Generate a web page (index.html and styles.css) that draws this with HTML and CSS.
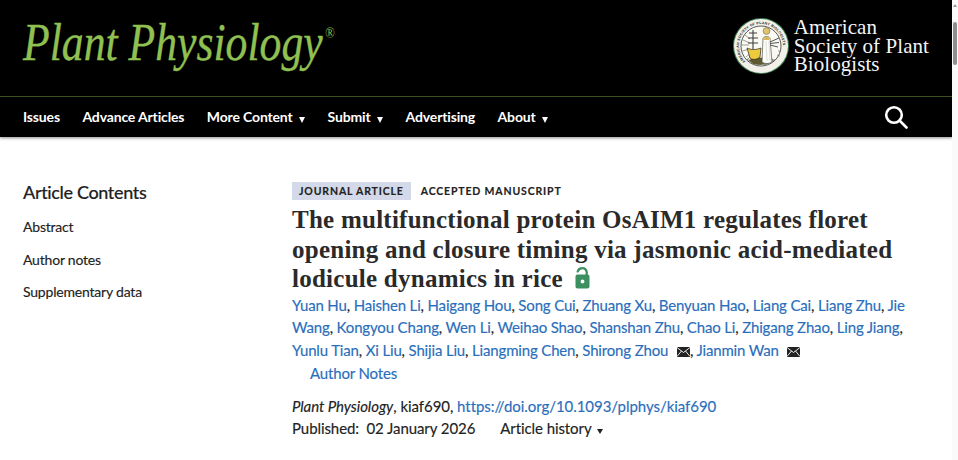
FILE: index.html
```html
<!DOCTYPE html>
<html lang="en">
<head>
<meta charset="utf-8">
<title>Plant Physiology</title>
<link rel="stylesheet" href="styles.css">
</head>
<body>
<div class="page">
  <header class="site-header">
    <div class="brand-row">
      <a class="journal-logo">Plant Physiology<sup class="reg">®</sup></a>
      <div class="society">
        <svg class="seal" width="56" height="56" viewBox="0 0 56 56">
          <defs><path id="ring" d="M12.400 43.600 A22 22 0 1 1 43.600 43.600"/><path id="ring2" d="M9 36 A22 22 0 0 0 47 36"/></defs>
          <circle cx="28" cy="28" r="28" fill="#3f7d54"/>
          <circle cx="28" cy="28" r="27" fill="#f1f1ea"/>
          <circle cx="28" cy="28" r="20" fill="#fafaf2" stroke="#333" stroke-width=".8"/>
          <text class="seal-text"><textPath href="#ring">AMERICAN SOCIETY OF PLANT BIOLOGISTS</textPath></text>
          <text class="seal-text small"><textPath href="#ring2" startOffset="16%">FOUNDED 1924 · MARYLAND</textPath></text>
          <g stroke="#77776e" stroke-width=".7"><path d="M9 27h7M10 22l7 3M9.500 33l7-2M12 17l5 4M13 39l5-4M14 42l5-5M45 33h3M44 37l3 1"/></g>
          <path d="M16 42c6-3 17-3 24-1l-4 5c-6 1-12 1-16 0z" fill="#5d5a30"/>
          <path d="M14 30c4 2 9 2 14 0l-1 9c-3 3-8 3-10 1z" fill="#edc93c" stroke="#222" stroke-width=".7"/>
          <path d="M20 12v19M16 15h8M15 20h10M15 25h10" stroke="#3d3d3d" stroke-width="1.100" fill="none"/>
          <path d="M30 20c1-2 6-2 7 0l2 24c-3 2-8 2-10 0z" fill="#fdfdf8" stroke="#555" stroke-width=".7"/>
          <path d="M33 23l1 20M36 23l1 20" stroke="#bbb" stroke-width=".5"/>
          <circle cx="33.500" cy="13" r="3.400" fill="#e3c46e" stroke="#555" stroke-width=".5"/>
          <path d="M30 19h7l-1 3h-6z" fill="#d8b95a"/>
          <path d="M37 24l9-4M37 25.500l9-1M37 27l8 2" stroke="#555" stroke-width="1"/>
        </svg>
        <div class="society-name">American<br>Society of Plant<br>Biologists</div>
      </div>
    </div>
    <nav class="main-nav">
      <ul class="nav-list">
        <li>Issues</li>
        <li>Advance Articles</li>
        <li>More Content<span class="caret"></span></li>
        <li>Submit<span class="caret"></span></li>
        <li>Advertising</li>
        <li>About<span class="caret"></span></li>
      </ul>
      <svg class="search" width="24" height="24" viewBox="0 0 24 24" fill="none" stroke="#fff" stroke-width="2.600"><circle cx="10" cy="10" r="7.800"/><path d="M15.500 15.500l7 7" stroke-linecap="round"/></svg>
    </nav>
  </header>
  <main class="content">
    <aside class="sidebar">
      <h2 class="contents-title">Article Contents</h2>
      <ul class="contents-list">
        <li>Abstract</li>
        <li>Author notes</li>
        <li>Supplementary data</li>
      </ul>
    </aside>
    <article class="article">
      <div class="tags"><span class="tag-primary">JOURNAL ARTICLE</span><span class="tag-plain">ACCEPTED MANUSCRIPT</span></div>
      <h1 class="title">The multifunctional protein OsAIM1 regulates floret opening and closure timing via jasmonic acid-mediated lodicule dynamics in rice
        <svg class="lock" width="15" height="22" viewBox="0 0 15 22"><path d="M2.700 4.500C3.500 2 5.500 1.200 7.500 1.200a4 4 0 0 1 4.200 4V8" fill="none" stroke="#3c8f5f" stroke-width="2.300" stroke-linecap="round"/><rect x="0.500" y="7.500" width="14" height="14" rx="2" fill="#3c8f5f"/><circle cx="7.500" cy="14.500" r="1.900" fill="#fff"/></svg>
      </h1>
      <p class="authors"><a>Yuan Hu</a>, <a>Haishen Li</a>, <a>Haigang Hou</a>, <a>Song Cui</a>, <a>Zhuang Xu</a>, <a>Benyuan Hao</a>, <a>Liang Cai</a>, <a>Liang Zhu</a>, <a>Jie Wang</a>, <a>Kongyou Chang</a>, <a>Wen Li</a>, <a>Weihao Shao</a>, <a>Shanshan Zhu</a>, <a>Chao Li</a>, <a>Zhigang Zhao</a>, <a>Ling Jiang</a>, <a>Yunlu Tian</a>, <a>Xi Liu</a>, <a>Shijia Liu</a>, <a>Liangming Chen</a>, <a>Shirong Zhou</a> <svg class="mail" width="13" height="10" viewBox="0 0 13 10"><rect width="13" height="10" fill="#222"/><path d="M0 .5l6.500 5 6.500-5M0 9.500l4.500-5.500M13 9.500L8.500 4" fill="none" stroke="#fff" stroke-width=".9"/></svg>, <a>Jianmin Wan</a> <svg class="mail" width="13" height="10" viewBox="0 0 13 10"><rect width="13" height="10" fill="#222"/><path d="M0 .5l6.500 5 6.500-5M0 9.500l4.500-5.500M13 9.500L8.500 4" fill="none" stroke="#fff" stroke-width=".9"/></svg></p>
      <p class="author-notes"><a>Author Notes</a></p>
      <p class="citation"><em>Plant Physiology</em>, kiaf690, <a>https://doi.org/10.1093/plphys/kiaf690</a></p>
      <p class="published"><span>Published:&nbsp; 02 January 2026</span><span class="history">Article history<span class="caret caret-small"></span></span></p>
    </article>
  </main>
</div>
<div class="scrollbar"><span class="arrow"></span><span class="thumb"></span></div>
</body>
</html>
```
FILE: styles.css
```css
* { box-sizing: border-box; }
html, body { margin: 0; height: 460px; overflow: hidden; background: #fff; }
body { display: flex; font-family: "Lato", sans-serif; color: #222; }
.page { width: 952px; flex: none; }
.site-header { background: #000; color: #fff; box-shadow: 0 1px 3px rgba(0,0,0,.45); }
.brand-row { height: 97px; display: flex; justify-content: space-between; align-items: flex-start; padding: 0 23px; border-bottom: 1px solid #3c4f1e; }
.journal-logo { font: italic 52px/1 "Liberation Serif", serif; color: #90c052; -webkit-text-stroke: .35px #90c052; margin-top: 17px; white-space: nowrap; transform: scaleX(.84); transform-origin: 0 0; width: 314px; }
.reg { font-size: 15px; font-style: normal; -webkit-text-stroke: 0; vertical-align: 22px; line-height: 0; margin-left: 3px; }
.society { display: flex; align-items: center; gap: 5px; margin-top: 18px; }
.seal-text { font: 700 3.500px "Liberation Sans", sans-serif; fill: #222; letter-spacing: .25px; }
.seal-text.small { font-size: 2.200px; letter-spacing: 0; }
.society-name { font: 21px/18.500px "Liberation Serif", serif; color: #f4f4f4; letter-spacing: .07px; white-space: nowrap; }
.main-nav { height: 40px; display: flex; align-items: center; justify-content: space-between; padding: 0 23px; }
.nav-list { list-style: none; margin: 0; padding: 0; display: flex; gap: 22.500px; font: 700 14px/1 "Lato", sans-serif; letter-spacing: -.15px; }
.caret { display: inline-block; margin-left: 6.500px; border-style: solid; border-width: 6px 3.500px 0; border-color: currentColor transparent transparent; vertical-align: -1px; }
.search { margin-right: 21px; }
.content { display: flex; padding: 45px 35px 0 23px; -webkit-text-stroke: .15px currentColor; }
.sidebar { width: 269px; flex: none; }
.contents-title { font: 500 18px/20px "Lato", sans-serif; margin: 0 0 16px; color: #222; letter-spacing: -.35px; }
.contents-list { list-style: none; margin: 0; padding: 0; font-size: 14px; line-height: 18px; letter-spacing: -.2px; }
.contents-list li { margin-bottom: 14.700px; }
.article { flex: 1; min-width: 0; }
.tags { display: flex; align-items: center; font: 700 10.500px/18px "Lato", sans-serif; letter-spacing: .85px; }
.tag-primary { background: #d3d9e8; padding: 0 7px; margin-right: 10px; }
.title { font: 700 25px/29.500px "Liberation Serif", serif; margin: 5px 0 0; color: #2a2a2a; letter-spacing: .25px; -webkit-text-stroke: 0; }
.lock { vertical-align: -2px; margin-left: 6px; }
.authors, .author-notes, .citation, .published { margin: 0; font-size: 15px; line-height: 22.800px; letter-spacing: -.16px; }
a { color: #2a6ebb; }
.mail { vertical-align: -1px; margin-left: 5px; }
.author-notes { padding-left: 18px; }
.citation { margin-top: 10px; letter-spacing: -.05px; }
.published { display: flex; gap: 25px; margin-top: 0; letter-spacing: -.08px; }
.caret-small { margin-left: 5px; border-width: 5px 3px 0; vertical-align: 0; }
.scrollbar { width: 6px; flex: none; background: #fafafa; position: relative; }
.arrow { display: block; width: 0; margin: 4px auto 0; border-style: solid; border-width: 0 2.500px 3px; border-color: transparent transparent #9a9a9a; }
.thumb { position: absolute; top: 22px; left: 1px; width: 4px; height: 43px; background: #8f8f8f; border-radius: 2px; }
```
